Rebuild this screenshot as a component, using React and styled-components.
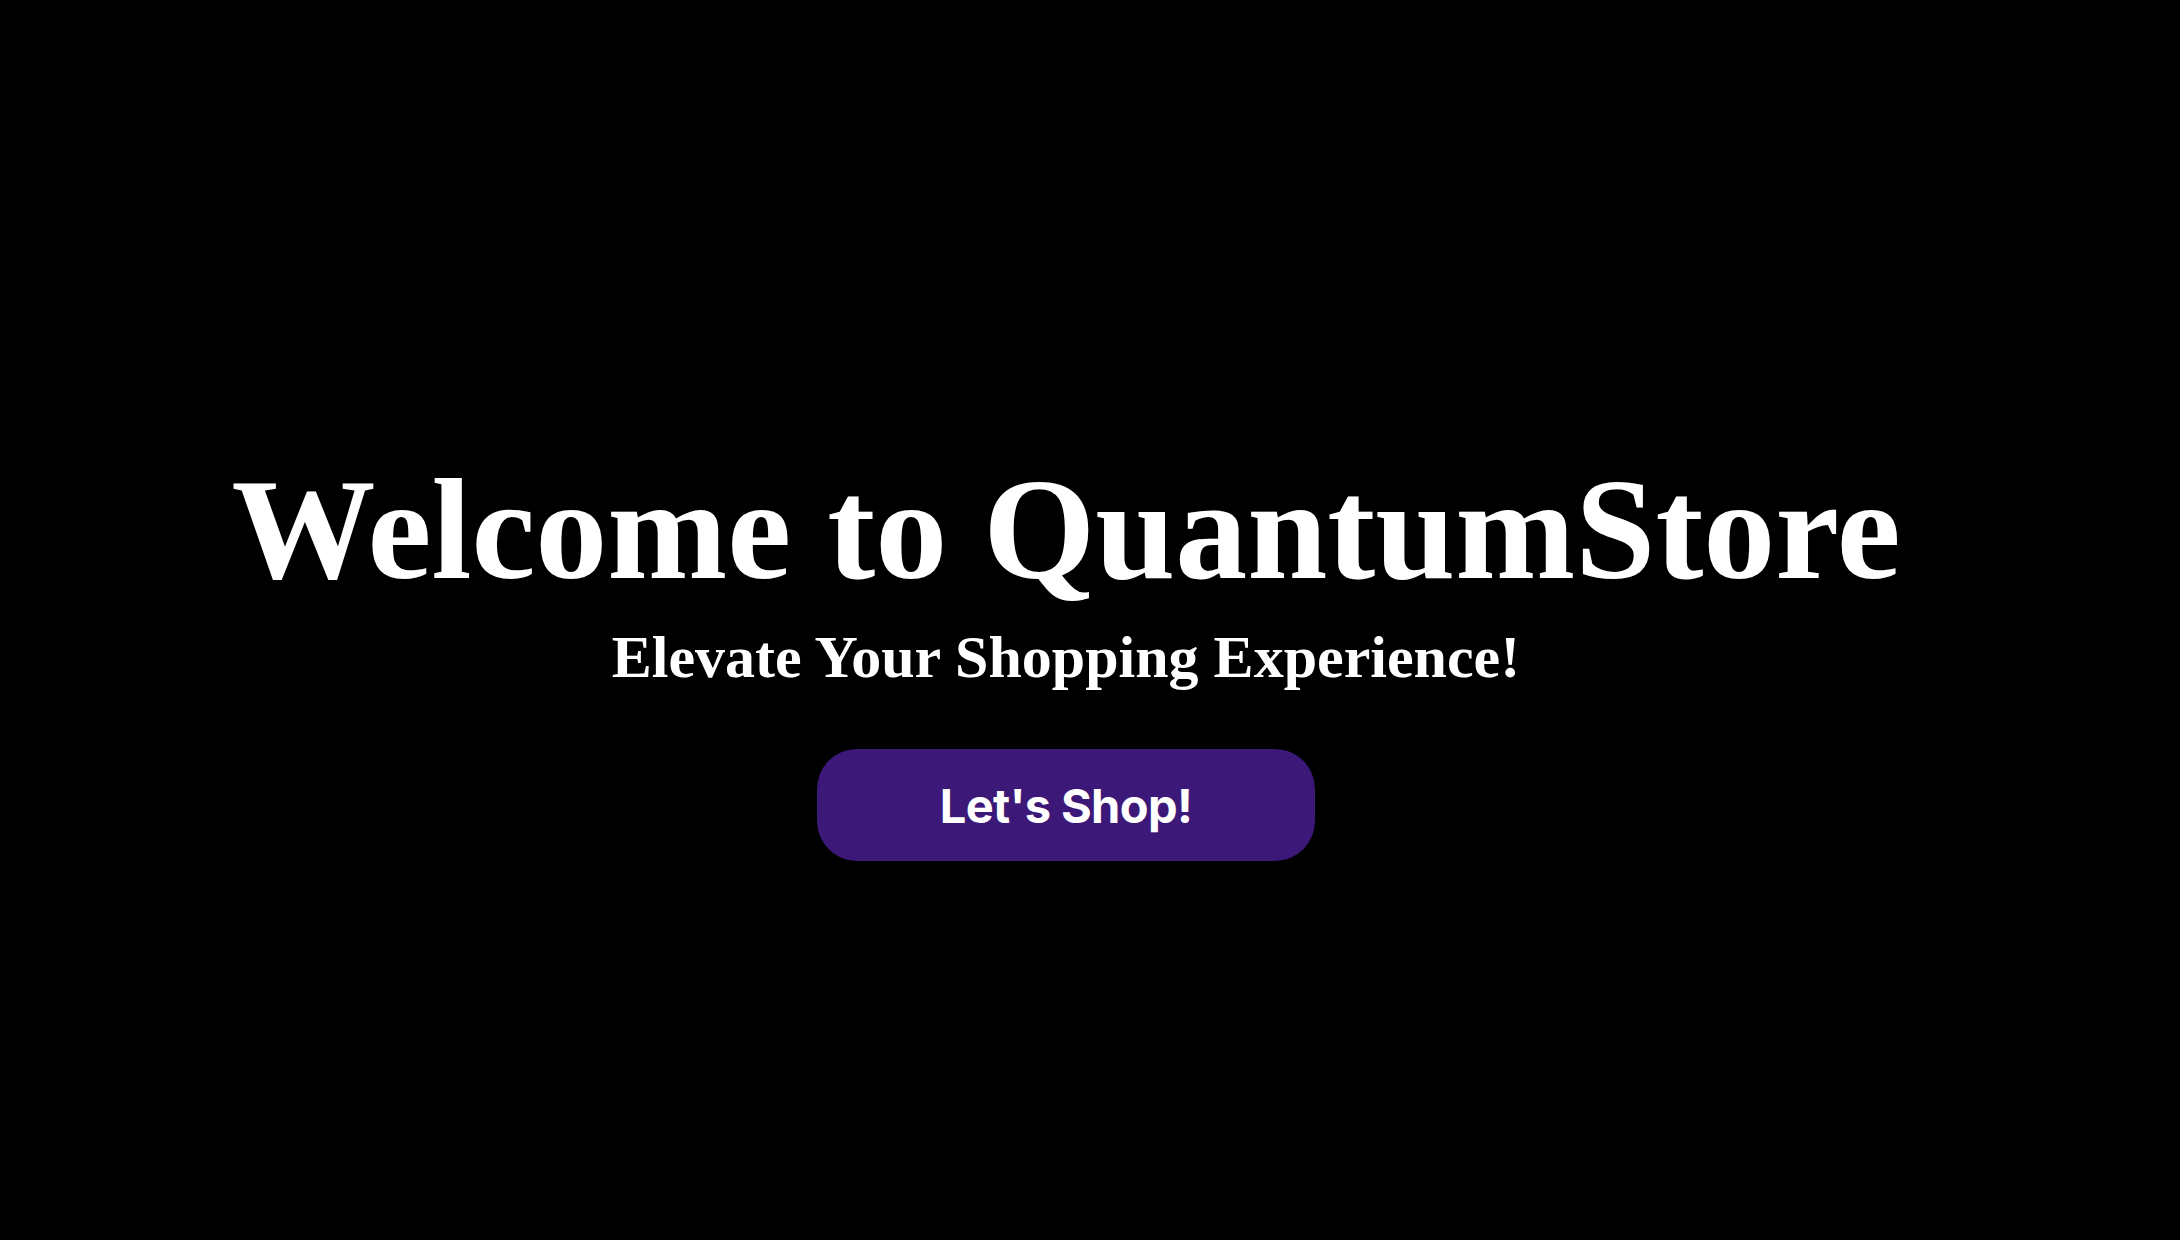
import styled, { createGlobalStyle } from "styled-components";

const GlobalStyle = createGlobalStyle`
  html, body {
    margin: 0;
    padding: 0;
    background: #000;
  }
`;

const Hero = styled.section`
    display: flex;
    flex-direction: column;
    align-items: center;
    justify-content: center;
    min-height: 100vh;
    box-sizing: border-box;
    padding: 68px 48px 0 0;
    background: #000;
    color: #fff;
`;

const Title = styled.h1`
    margin: 0;
    font-family: "Liberation Serif", "Times New Roman", serif;
    font-weight: bold;
    font-size: 144px;
    line-height: 1.15;
    white-space: nowrap;
`;

const Tagline = styled.h2`
    margin: 11px 0 0;
    font-family: "Liberation Serif", "Times New Roman", serif;
    font-weight: bold;
    font-size: 60px;
    line-height: 1.15;
`;

const ShopButton = styled.button`
    margin-top: 57px;
    width: 498px;
    height: 112px;
    border: none;
    border-radius: 40px;
    background: #3c1878;
    color: #fff;
    font-family: Inter, "Noto Sans", sans-serif;
    font-weight: 700;
    font-size: 47px;
    letter-spacing: -0.6px;
    cursor: pointer;
`;

const App = () => {
    return (
        <>
            <GlobalStyle />
            <Hero>
                <Title>Welcome to QuantumStore</Title>
                <Tagline>Elevate Your Shopping Experience!</Tagline>
                <ShopButton>Let's Shop!</ShopButton>
            </Hero>
        </>
    );
};

export default App;
